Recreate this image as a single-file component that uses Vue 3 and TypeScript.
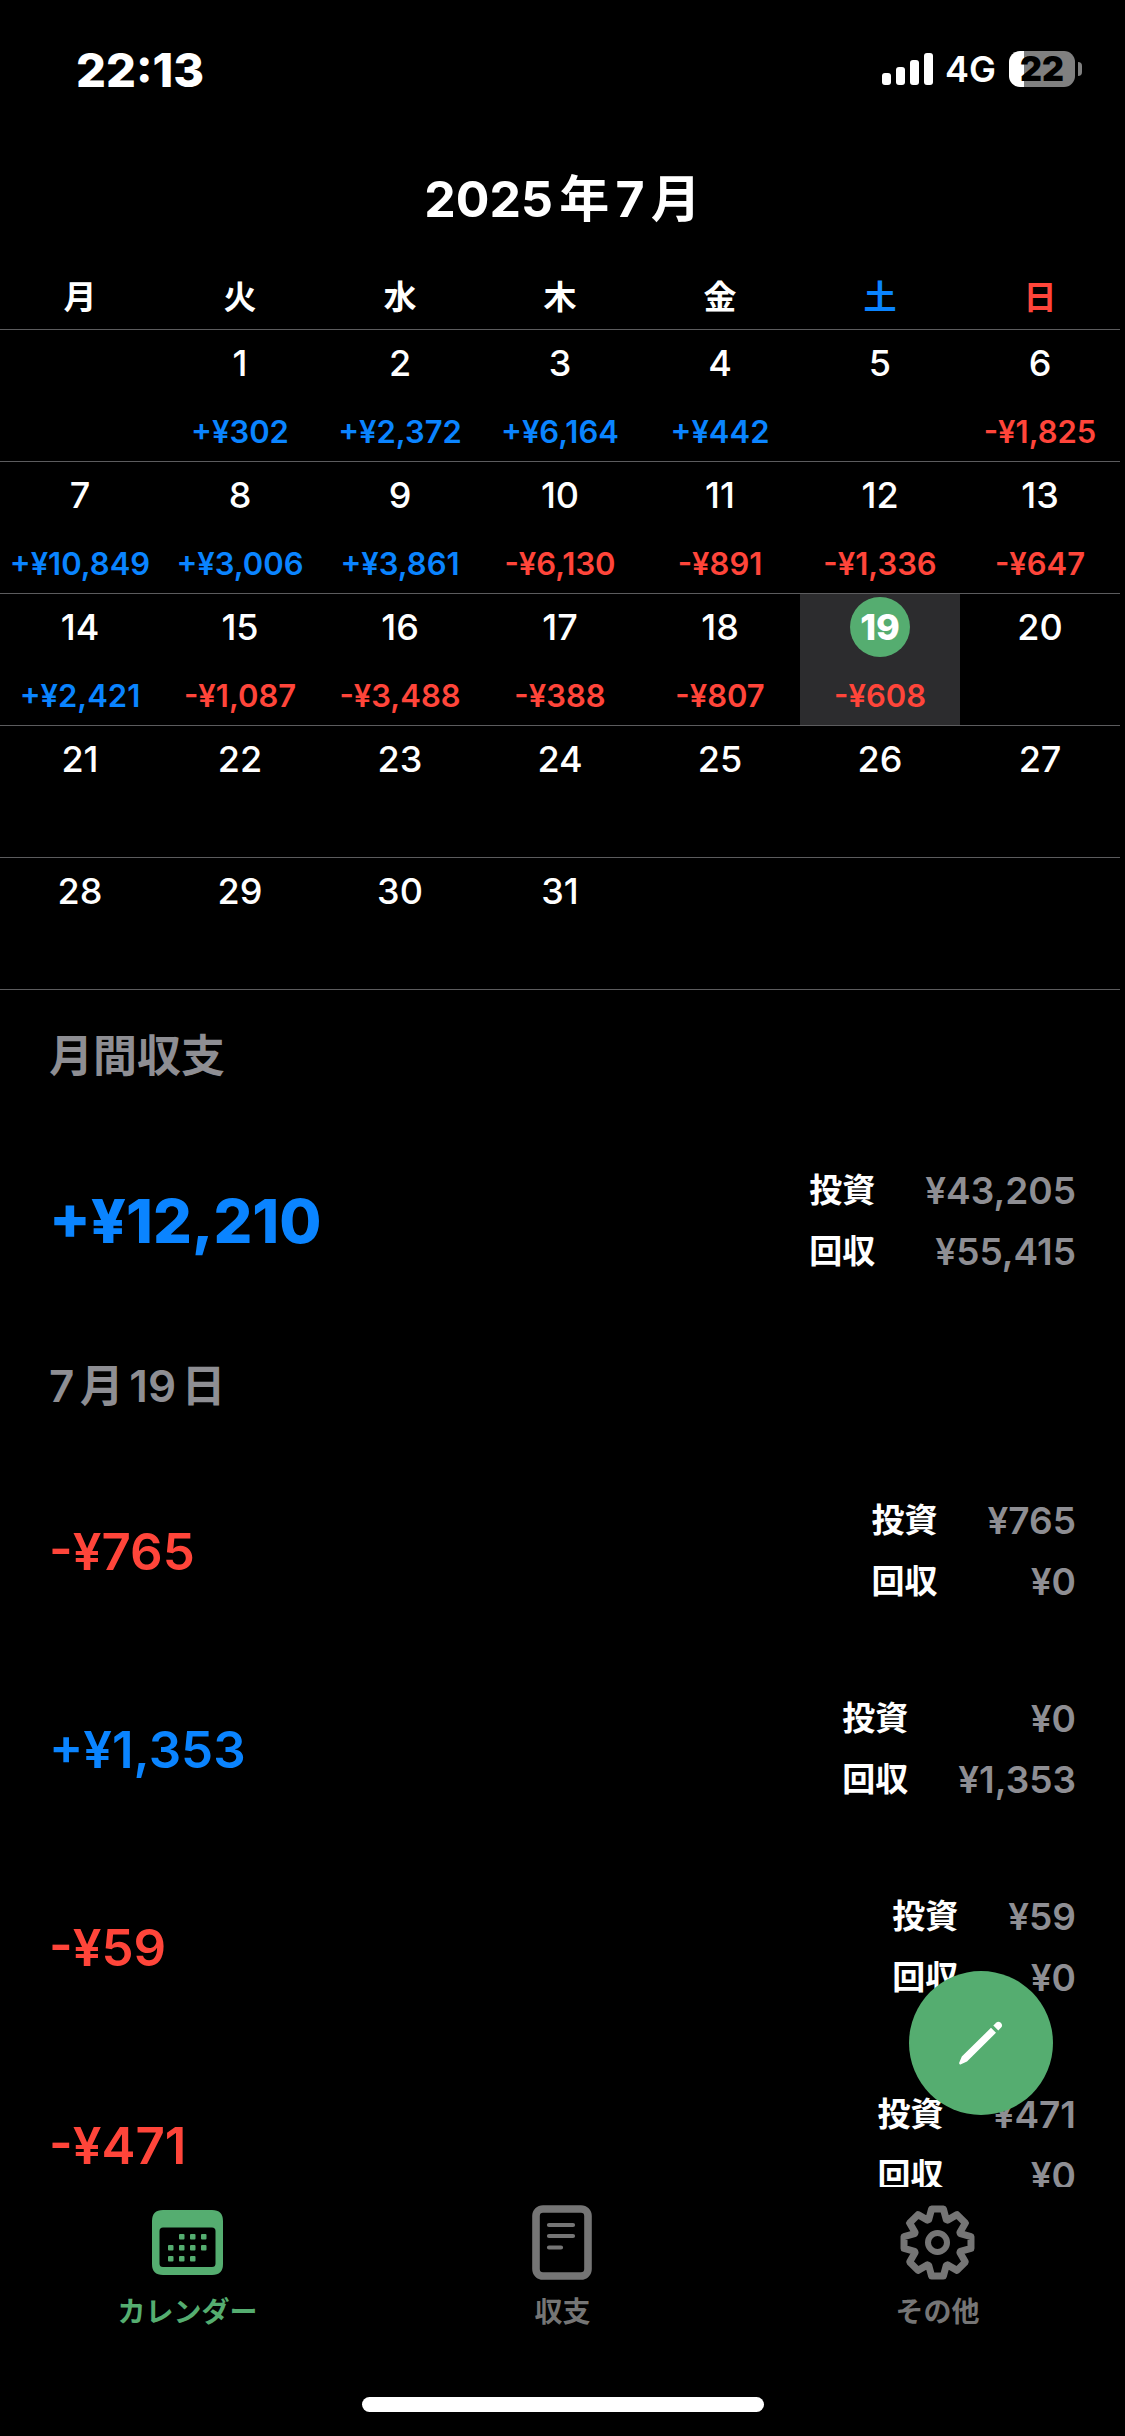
<script setup lang="ts">
import { computed, ref } from 'vue'

interface Entry {
  invested: number
  returned: number
}

const weekdays = ['月', '火', '水', '木', '金', '土', '日']

const balances: Record<number, number> = {
  1: 302, 2: 2372, 3: 6164, 4: 442, 6: -1825,
  7: 10849, 8: 3006, 9: 3861, 10: -6130, 11: -891, 12: -1336, 13: -647,
  14: 2421, 15: -1087, 16: -3488, 17: -388, 18: -807, 19: -608,
}

const today = 19
const selected = ref(today)

/* July 2025 starts on a Tuesday, so the first column of week one is empty. */
const weeks = Array.from({ length: 5 }, (_, w) =>
  Array.from({ length: 7 }, (_, d) => {
    const day = w * 7 + d
    return day >= 1 && day <= 31 ? day : null
  }),
)

const month: Entry = { invested: 43205, returned: 55415 }
const entries: Entry[] = [
  { invested: 765, returned: 0 },
  { invested: 0, returned: 1353 },
  { invested: 59, returned: 0 },
  { invested: 471, returned: 0 },
]

const sections = computed(() => [
  { title: '月間収支', total: true, rows: [month] },
  { title: `7月${selected.value}日`, total: false, rows: entries },
])

const yen = (n: number) => '¥' + Math.abs(n).toLocaleString('en-US')
const signed = (n: number) => (n < 0 ? '-' : '+') + yen(n)
const tone = (n: number) => (n < 0 ? 'minus' : 'plus')
const net = (e: Entry) => e.returned - e.invested

/* Outline of an eight-toothed gear centred on the origin. */
const gear = (() => {
  const corners = [[-21, 24.5], [-10, 34], [10, 34], [21, 24.5]]
  const points: string[] = []
  for (let i = 0; i < 8; i++) {
    for (const [offset, radius] of corners) {
      const a = ((i * 45 + offset) * Math.PI) / 180
      points.push(`${(radius * Math.sin(a)).toFixed(2)} ${(-radius * Math.cos(a)).toFixed(2)}`)
    }
  }
  return `M${points.join('L')}Z`
})()

const dots = [
  [30, 27], [41, 27], [52, 27],
  [19, 38], [30, 38], [41, 38], [52, 38],
  [19, 49], [30, 49], [41, 49],
]

const tab = ref('calendar')
</script>

<template>
  <div class="app">
    <header class="status">
      <time class="clock">22:13</time>
      <div class="indicators">
        <svg class="signal" viewBox="0 0 51 32" aria-hidden="true">
          <rect x="0" y="20" width="9" height="12" rx="3" />
          <rect x="14" y="14" width="9" height="18" rx="3" />
          <rect x="28" y="7" width="9" height="25" rx="3" />
          <rect x="42" y="0" width="9" height="32" rx="3" />
        </svg>
        <span class="network">4G</span>
        <span class="battery">22</span>
        <i class="nub"></i>
      </div>
    </header>

    <h1 class="month">2025年7月</h1>

    <table class="calendar">
      <thead>
        <tr>
          <th v-for="(name, i) in weekdays" :key="name" scope="col" :class="{ plus: i === 5, minus: i === 6 }">
            {{ name }}
          </th>
        </tr>
      </thead>
      <tbody>
        <tr v-for="(week, w) in weeks" :key="w">
          <td v-for="(day, d) in week" :key="d">
            <button
              v-if="day"
              type="button"
              class="day"
              :class="{ selected: day === selected, today: day === today }"
              @click="selected = day"
            >
              <span class="number">{{ day }}</span>
              <span v-if="balances[day]" class="balance" :class="tone(balances[day])">{{ signed(balances[day]) }}</span>
            </button>
          </td>
        </tr>
      </tbody>
    </table>

    <main class="content">
      <div class="scroller">
        <section v-for="section in sections" :key="section.title">
          <h2 class="heading">{{ section.title }}</h2>
          <div v-for="(row, i) in section.rows" :key="i" class="entry">
            <strong class="net" :class="[tone(net(row)), { total: section.total }]">{{ signed(net(row)) }}</strong>
            <dl class="detail">
              <dt>投資</dt>
              <dd>{{ yen(row.invested) }}</dd>
              <dt>回収</dt>
              <dd>{{ yen(row.returned) }}</dd>
            </dl>
          </div>
        </section>
      </div>
      <button type="button" class="compose" aria-label="記録する">
        <svg viewBox="0 0 44 44" aria-hidden="true">
          <path d="M1 43.4Q0 43 .2 41.800L2.800 35.600L32 6.800L37 11.800L8 40.500L2 43.300Q1.500 43.600 1 43.400Z" />
          <path d="M34.300 4.500L37.400 1.500Q39.300-.2 41.800 1.800Q44 4.300 42.300 6.300L39.300 9.400Z" />
        </svg>
      </button>
    </main>

    <nav class="tabs">
      <button type="button" class="tab" :class="{ active: tab === 'calendar' }" @click="tab = 'calendar'">
        <svg viewBox="0 0 75 75" aria-hidden="true">
          <path
            fill-rule="evenodd"
            d="M13 5H62Q73 5 73 16V59Q73 70 62 70H13Q2 70 2 59V16Q2 5 13 5ZM13 22.500Q9.500 22.500 9.500 26V58.500Q9.500 62 13 62H62Q65.500 62 65.500 58.500V26Q65.500 22.500 62 22.500Z"
          />
          <rect v-for="([x, y], i) in dots" :key="i" :x="x - 1" :y="y + 2" width="5.500" height="5.500" rx="1" />
        </svg>
        <span>カレンダー</span>
      </button>
      <button type="button" class="tab" :class="{ active: tab === 'balance' }" @click="tab = 'balance'">
        <svg class="line" viewBox="0 0 75 75" aria-hidden="true">
          <rect x="11" y="4" width="52" height="67" rx="7" stroke-width="7.600" />
          <path d="M24 20H48M24 31H48M24 42.500H36" stroke-width="4.200" />
        </svg>
        <span>収支</span>
      </button>
      <button type="button" class="tab" :class="{ active: tab === 'other' }" @click="tab = 'other'">
        <svg class="line" viewBox="-37.500 -37.500 75 75" aria-hidden="true">
          <path :d="gear" stroke-width="7" />
          <circle r="9.500" stroke-width="6" />
        </svg>
        <span>その他</span>
      </button>
    </nav>

    <div class="home"></div>
  </div>
</template>

<style>
body {
  background: #000;
}
</style>

<style scoped>
.app {
  display: flex;
  flex-direction: column;
  height: 100vh;
  background: #000;
  color: #fff;
  font-family: Inter, 'Noto Sans CJK JP', sans-serif;
  font-weight: 500;
  text-autospace: normal;
}

button {
  margin: 0;
  padding: 0;
  border: 0;
  background: none;
  color: inherit;
  font: inherit;
  cursor: pointer;
}

.plus {
  color: #0a84ff;
}

.minus {
  color: #ff453a;
}

.status {
  display: flex;
  flex: none;
  align-items: center;
  justify-content: space-between;
  height: 138px;
  padding: 0 43px 0 76px;
}

.clock {
  font-size: 47px;
  font-weight: 800;
}

.indicators {
  display: flex;
  align-items: center;
}

.signal {
  width: 51px;
  height: 32px;
  fill: #fff;
}

.network {
  margin: 0 13px 0 12px;
  font-size: 36px;
  font-weight: 600;
}

.battery {
  width: 66px;
  border-radius: 11px;
  background: linear-gradient(90deg, #fff 15px, #808080 15px);
  color: #000;
  font-size: 34px;
  font-weight: 900;
  line-height: 36px;
  text-align: center;
}

.nub {
  width: 4px;
  height: 14px;
  margin-left: 3px;
  border-radius: 0 4px 4px 0;
  background: #808080;
}

.month {
  flex: none;
  margin: 0;
  font-size: 50px;
  font-weight: 700;
  line-height: 122px;
  text-align: center;
}

.calendar {
  flex: none;
  width: calc(100% - 5px);
  margin-top: 5px;
  border-spacing: 0;
  table-layout: fixed;
}

.calendar th,
.calendar td {
  padding: 0;
  border-bottom: 1px solid #5c5c5e;
}

.calendar th {
  height: 64px;
  font-size: 33px;
  font-weight: 600;
  line-height: 64px;
}

.calendar td {
  height: 131px;
}

.day {
  display: flex;
  flex-direction: column;
  align-items: center;
  width: 100%;
  height: 131px;
  padding-top: 3px;
}

.number {
  width: 60px;
  border-radius: 30px;
  font-size: 36px;
  line-height: 60px;
}

.selected {
  background: #2c2c2e;
}

.today .number {
  background: #55ad70;
  font-weight: 800;
}

.balance {
  margin-top: 19px;
  font-size: 31px;
  font-weight: 600;
  line-height: 40px;
  white-space: nowrap;
}

.content {
  position: relative;
  flex: 1;
  min-height: 0;
}

.scroller {
  height: 100%;
  overflow-y: auto;
  scrollbar-width: none;
}

.heading {
  margin: 0;
  padding: 0 49px;
  color: #8e8e93;
  font-size: 44px;
  font-weight: 600;
  line-height: 132px;
}

.entry {
  display: flex;
  align-items: center;
  justify-content: space-between;
  height: 198px;
  padding: 0 49px;
}

.net {
  font-size: 51px;
  font-weight: 600;
}

.total {
  font-size: 61px;
  font-weight: 800;
}

.detail {
  display: grid;
  grid-template-columns: auto auto;
  column-gap: 50px;
  margin: 0;
  font-weight: 600;
  line-height: 61px;
}

.detail dt {
  font-size: 33px;
}

.detail dd {
  margin: 0;
  color: #8e8e93;
  font-size: 37px;
  text-align: right;
}

.compose {
  position: absolute;
  right: 72px;
  bottom: 72px;
  display: grid;
  place-items: center;
  width: 144px;
  height: 144px;
  border-radius: 50%;
  background: #55ad70;
}

.compose svg {
  width: 44px;
  height: 44px;
  fill: #fff;
}

.tabs {
  display: flex;
  flex: none;
  padding-top: 18px;
}

.tab {
  display: flex;
  flex: 1;
  flex-direction: column;
  align-items: center;
  gap: 12px;
  color: #757575;
  font-size: 28px;
  font-weight: 600;
  line-height: 40px;
}

.tab.active {
  color: #55ad70;
}

.tab svg {
  width: 75px;
  height: 75px;
  fill: currentColor;
}

.tab .line {
  fill: none;
  stroke: currentColor;
  stroke-linecap: round;
  stroke-linejoin: round;
}

.home {
  flex: none;
  align-self: center;
  width: 402px;
  height: 15px;
  margin: 65px 0 24px;
  border-radius: 8px;
  background: #fff;
}
</style>
